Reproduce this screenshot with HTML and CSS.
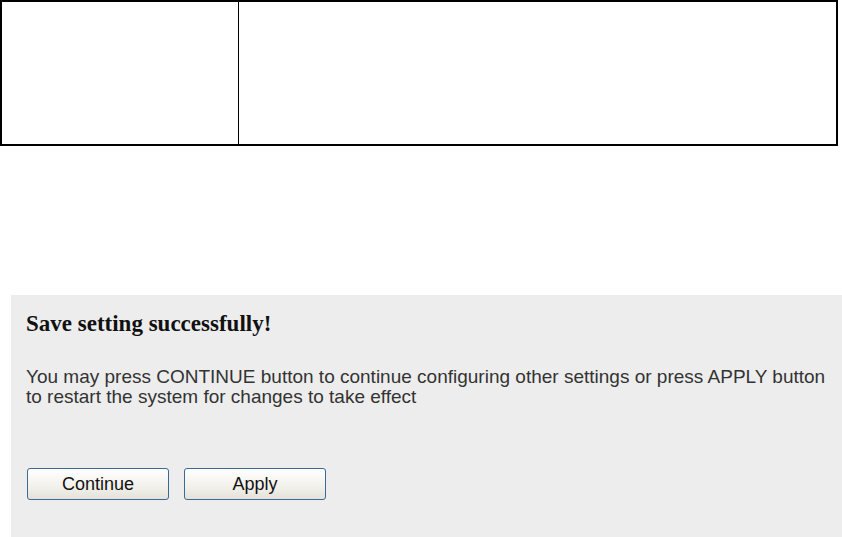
FILE: index.html
```html
<!DOCTYPE html>
<html>
<head>
<meta charset="utf-8">
<link rel="stylesheet" href="styles.css">
</head>
<body>
<div class="page">
  <table class="frame">
    <tr>
      <td class="left"></td>
      <td class="right"></td>
    </tr>
  </table>
  <div class="panel">
    <h1 class="title">Save setting successfully!</h1>
    <p class="msg">You may press CONTINUE button to continue configuring other settings or press APPLY button to restart the system for changes to take effect</p>
    <div class="buttons">
      <button class="btn">Continue</button>
      <button class="btn">Apply</button>
    </div>
  </div>
</div>
</body>
</html>
```
FILE: styles.css
```css
html, body {
  margin: 0;
  padding: 0;
  background: #ffffff;
}
.page {
  width: 842px;
  height: 537px;
  overflow: hidden;
  display: flex;
  flex-direction: column;
}
.frame {
  width: 838px;
  height: 146px;
  border-collapse: collapse;
  border: 2px solid #000;
  flex: none;
}
.frame td {
  padding: 0;
}
.frame .left {
  width: 236px;
  border-right: 1px solid #000;
}
.panel {
  margin: 149px 0 0 11px;
  flex: 1;
  background: #ededed;
  padding: 16px 0 0 15px;
  font-family: "Liberation Sans", Arial, sans-serif;
  color: #222;
}
.title {
  margin: 0;
  font-family: "Liberation Serif", "Times New Roman", serif;
  font-weight: bold;
  font-size: 23px;
  line-height: 26px;
  color: #111;
}
.msg {
  margin: 30px 0 0 0;
  font-size: 19px;
  line-height: 20px;
  width: 815px;
  color: #333;
}
.buttons {
  display: flex;
  gap: 15px;
  margin: 61px 0 0 1px;
}
.btn {
  width: 142px;
  height: 32px;
  border: 1px solid #3b6a98;
  border-radius: 3px;
  background: linear-gradient(#ffffff, #f1f0ea 60%, #e4e2d9);
  font-family: "Liberation Sans", Arial, sans-serif;
  font-size: 18px;
  color: #111;
  padding: 0;
}
```
